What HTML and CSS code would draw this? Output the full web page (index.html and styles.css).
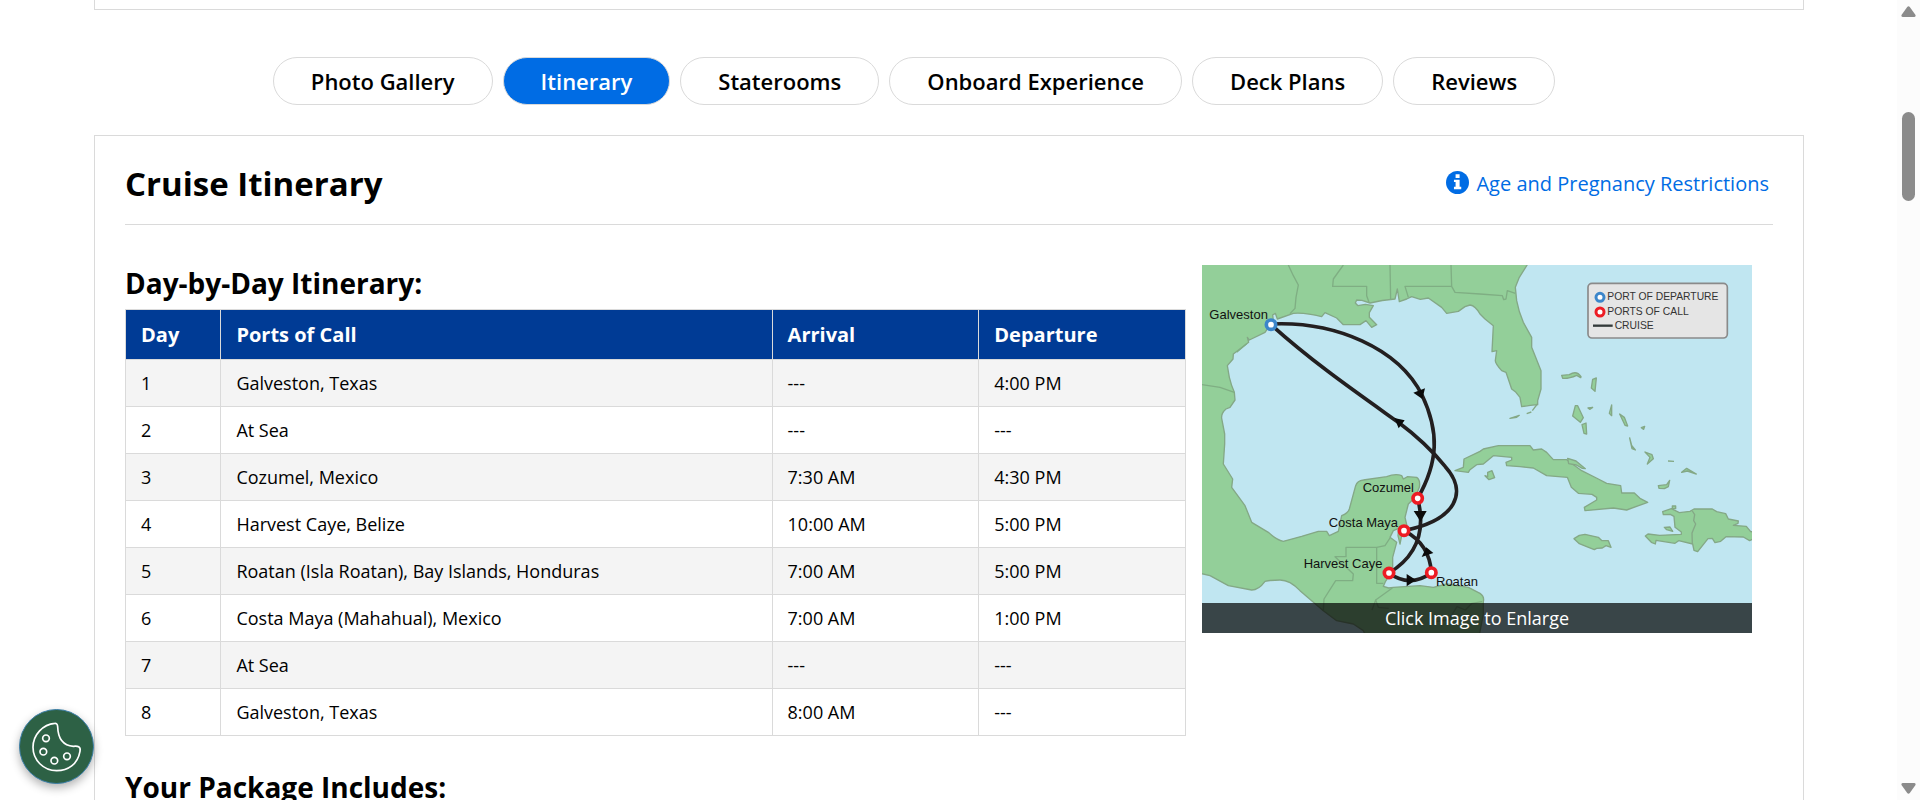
FILE: index.html
```html
<!DOCTYPE html>
<html lang="en">
<head>
<meta charset="utf-8">
<meta name="viewport" content="width=device-width, initial-scale=1">
<title>Cruise Itinerary</title>
<link rel="stylesheet" href="styles.css">
</head>
<body>
<main class="page">
  <div class="panel panel-previous"></div>

  <nav class="tabs" aria-label="Cruise details">
    <button class="tab" type="button">Photo Gallery</button>
    <button class="tab tab-active" type="button" aria-current="true">Itinerary</button>
    <button class="tab" type="button">Staterooms</button>
    <button class="tab" type="button">Onboard Experience</button>
    <button class="tab" type="button">Deck Plans</button>
    <button class="tab" type="button">Reviews</button>
  </nav>

  <section class="panel itinerary">
    <header class="panel-header">
      <h1 class="panel-title">Cruise Itinerary</h1>
      <a class="restrictions" href="#restrictions">
        <svg class="info-icon" viewBox="0 0 24 24" aria-hidden="true">
          <circle cx="12" cy="12" r="12" fill="#006ce4"/>
          <path fill="#fff" d="M10 3.500h4.200v3.800H10zM8.300 9h5.900v7.500h1.700v2.500H8.300v-2.500H10v-5H8.300z"/>
        </svg>
        <span>Age and Pregnancy Restrictions</span>
      </a>
    </header>

    <div class="columns">
      <div class="schedule">
        <h2 class="section-title" id="schedule-title">Day-by-Day Itinerary:</h2>
        <table class="schedule-table" aria-labelledby="schedule-title">
          <colgroup><col class="col-day"><col class="col-port"><col class="col-time"><col class="col-time"></colgroup>
          <thead>
            <tr><th scope="col">Day</th><th scope="col">Ports of Call</th><th scope="col">Arrival</th><th scope="col">Departure</th></tr>
          </thead>
          <tbody>
            <tr><td>1</td><td>Galveston, Texas</td><td>---</td><td>4:00 PM</td></tr>
            <tr><td>2</td><td>At Sea</td><td>---</td><td>---</td></tr>
            <tr><td>3</td><td>Cozumel, Mexico</td><td>7:30 AM</td><td>4:30 PM</td></tr>
            <tr><td>4</td><td>Harvest Caye, Belize</td><td>10:00 AM</td><td>5:00 PM</td></tr>
            <tr><td>5</td><td>Roatan (Isla Roatan), Bay Islands, Honduras</td><td>7:00 AM</td><td>5:00 PM</td></tr>
            <tr><td>6</td><td>Costa Maya (Mahahual), Mexico</td><td>7:00 AM</td><td>1:00 PM</td></tr>
            <tr><td>7</td><td>At Sea</td><td>---</td><td>---</td></tr>
            <tr><td>8</td><td>Galveston, Texas</td><td>8:00 AM</td><td>---</td></tr>
          </tbody>
        </table>
      </div>

      <a class="map" href="#map">
        <svg class="map-image" viewBox="0 0 1650 1104" role="img" aria-label="Route map">
          <rect width="1650" height="1104" fill="#c0e6f1"/>
          <g class="land">
            <path d="M-6 -6H979L952 37 940 67 944 107Q950 140 964 172L989 217V247L1017 317V372L1007 407V419L985 421 959 425 954 397 940 380 929 372 912 322 899 317Q880 295 880 287L884 257 870 260 874 182 849 162 834 147Q820 122 804 120L789 125 769 139 734 145 719 127 679 99 655 103 629 95 614 102 592 110 586 72 579 102Q540 105 504 114L480 106 464 105 460 114 468 122 490 118 514 122 502 143 502 157 524 179 509 187 492 167 474 179H424L404 159 369 143 359 155Q310 142 274 145L226 162 220 145 212 150 214 166 189 202 142 225 136 217 140 232 94 267 93 282 76 302 82 337Q88 362 97 382L99 405 84 427 72 432Q57 445 59 460L68 507V537L64 597 92 642 89 667 129 722 149 772 199 802Q225 825 244 829L299 814 349 799 374 799 382 812 409 799 419 752Q438 745 442 732L461 662Q466 647 484 645L554 635Q580 625 599 632L604 642 617 635 644 637Q656 645 652 667L640 697 619 717 609 757 616 787 599 812 594 837 588 812 590 790 574 797 564 817 584 832 572 877V917L550 950 544 964 560 969 574 967 654 962 694 967 734 957 799 967 834 985Q848 995 844 1010V1047L832 1110H490L484 1097 454 1077 404 1067 364 1037 294 977Q264 945 234 945T189 949Q170 975 149 975L79 962 24 932-6 925Z"/>
            <path d="M759 617L784 607 786 582 834 559 844 552 889 542H984L994 555 1019 552 1034 562 1054 584H1094L1139 617 1189 642 1214 655 1256 662 1259 684H1297L1314 700 1337 712 1274 735 1234 729 1149 737 1147 727 1184 705V697L1170 688 1129 685 1108 667 1096 637 1034 632 994 609 954 605 914 602 912 592 929 585V577L874 572 844 597 824 599 804 614 799 622Z"/>
            <g transform="translate(804 -33)">
              <path d="M275 364L298 362Q320 348 333 368L332 371 320 364Q295 375 278 373ZM368 376L379 372 375 412 364 402ZM316 455L323 455 340 491 331 505 308 486ZM336 512L348 507 350 540 342 538ZM354 462L368 460 359 466ZM425 453V485L418 478ZM449 480L463 490 473 516 465 514ZM514 521L524 517 521 526ZM120 493L148 484 140 490ZM170 479L184 474M187 470L202 450M479 552L485 574 496 588 486 584ZM525 594L546 602 550 614 532 630 540 610Z"/>
            </g>
            <g transform="translate(804 537)">
              <path d="M45 95L53 98V85L66 80 74 101 57 107ZM293 43L318 51 346 74 337 73 319 63 296 59ZM312 284L328 274 345 271 385 280 396 290 415 290 423 310 408 305 397 312 380 313 373 317 350 308 328 299ZM565 125L590 122 599 109 595 128 583 134 567 133ZM635 85L650 73 679 90 652 81ZM594 51L612 52M583 250L600 249 608 262 590 257ZM607 186H617V194H607Z"/>
              <path d="M578 203L604 194 628 206 660 202 672 195H727L740 203 767 209 775 225 805 231 804 238 790 244 829 247 842 263 860 264V280L839 290 820 279 768 278 752 292 735 296 727 283 714 284 698 304 683 323 672 319 668 300 626 290 615 298 558 289 556 300 544 295 526 276 534 270 569 274 634 271 634 264 615 250 612 217 601 211 580 212Z"/>
              <path fill="none" d="M667 201L674 212 671 230 677 240 666 267 667 300"/>
            </g>
          </g>
          <g class="borders">
            <path d="M259 0L274 32 289 60 282 97 279 130 264 146M424 0L394 42 392 64H494V92L501 112M564 0L566 105M747 0L749 64H609L619 97M749 64L759 82 834 87 901 92 905 104 912 102 916 77 940 85M0 359L54 367 97 382M564 819L549 842 524 847V955H544M524 847H432V875H399L454 927 452 947H401L366 1002 364 1037M571 969L521 1005 529 1027 560 1030M521 1005L510 1035M840 1010L810 1015 790 1035 765 1025 740 1065 700 1070M104 262L134 236"/>
          </g>
          <g class="route">
            <path d="M207 177C400 168 590 250 660 390C712 500 710 590 647 700"/>
            <path d="M647 700C670 790 650 870 561 924Q624 970 688 923C685 870 660 825 606 797"/>
            <path d="M606 797C765 765 798 680 730 605C695 562 640 510 589 472C460 380 330 290 207 179"/>
          </g>
          <g fill="#0b0b0b">
            <path d="M634 383L669 370 661 402ZM577 459L608 466 590 490ZM635 738L674 738 656 770ZM614 927L642 945 614 964ZM659 876L694 864 673 847Z"/>
          </g>
          <g class="stop stop-start"><circle cx="207" cy="179" r="14"/></g>
          <g class="stop">
            <circle cx="647" cy="700" r="14"/><circle cx="606" cy="797" r="14"/>
            <circle cx="561" cy="924" r="14"/><circle cx="688" cy="923" r="14"/>
          </g>
          <g class="map-label">
            <text x="22" y="162">Galveston</text>
            <text x="482" y="680">Cozumel</text>
            <text x="380" y="785">Costa Maya</text>
            <text x="305" y="910">Harvest Caye</text>
            <text x="702" y="962">Roatan</text>
          </g>
          <rect x="1158" y="55" width="418" height="164" rx="12" fill="#e5e5e5" stroke="#8a8a8a" stroke-width="5"/>
          <circle cx="1194" cy="97" r="12" fill="#fff" stroke="#3c86ca" stroke-width="9"/>
          <circle cx="1194" cy="141" r="12" fill="#fff" stroke="#ed1c24" stroke-width="9"/>
          <path d="M1173 182H1232" stroke="#333a3a" stroke-width="7"/>
          <g class="legend-label">
            <text x="1216" y="106">PORT OF DEPARTURE</text>
            <text x="1216" y="150">PORTS OF CALL</text>
            <text x="1238" y="191">CRUISE</text>
          </g>
        </svg>
        <span class="map-caption">Click Image to Enlarge</span>
      </a>
    </div>

    <h2 class="section-title package-title">Your Package Includes:</h2>
  </section>
</main>

<button class="cookie-button" type="button" aria-label="Cookie settings">
  <svg class="cookie-icon" viewBox="0 0 150 150" fill="none" stroke="#fff" stroke-width="5" aria-hidden="true">
    <path d="M68 4Q76 3 77 14C78 48 91 70 124 73C137 71 147 74 144 88C137 127 108 146 74 146C34 146 3 114 3 76C3 37 34 7 68 4Z"/>
    <circle cx="42" cy="49" r="10"/><circle cx="34" cy="89" r="10"/><circle cx="67" cy="116" r="10"/><circle cx="105" cy="103" r="10"/>
  </svg>
</button>

<div class="scroll-rail" aria-hidden="true">
  <svg class="scroll-arrow" viewBox="0 0 15 11"><path d="M6.200 1Q7.500-.5 8.800 1L14.500 9Q15 11 13 11H2Q0 11 .5 9Z" fill="#8b8b8b"/></svg>
  <div class="scroll-thumb"></div>
  <svg class="scroll-arrow scroll-arrow-down" viewBox="0 0 15 11"><path d="M6.200 10Q7.500 11.500 8.800 10L14.500 2Q15 0 13 0H2Q0 0 .5 2Z" fill="#8b8b8b"/></svg>
</div>
</body>
</html>
```

FILE: styles.css
```css
* { box-sizing: border-box; }

body {
  margin: 0;
  padding-right: 23px;
  height: 100vh;
  overflow: hidden;
  background: #fff;
  color: #000;
  font-family: "Open Sans", "Noto Sans", sans-serif;
  font-size: 18px;
}

.page { padding: 0 93px 0 94px; }

.panel { border: 1px solid #dadada; }
.panel-previous { height: 10px; border-top: 0; }

.tabs {
  display: flex;
  justify-content: center;
  gap: 10px;
  padding: 47px 70px 30px 0;
}

.tab {
  height: 48px;
  padding: 0 37px;
  border: 1px solid #dadada;
  border-radius: 24px;
  background: #fff;
  color: #000;
  font: 600 22px/32px "Open Sans", "Noto Sans", sans-serif;
  white-space: nowrap;
}
.tab-active { background: #006ce4; color: #fff; }

.itinerary { padding: 0 30px 40px; }

.panel-header {
  display: flex;
  align-items: center;
  justify-content: space-between;
  height: 89px;
  padding: 7px 4px 0 0;
  border-bottom: 1px solid #dadada;
}
.panel-title { margin: 0; font-size: 33px; line-height: 44px; font-weight: 700; }

.restrictions {
  display: flex;
  align-items: flex-start;
  gap: 7px;
  color: #006ce4;
  font-size: 20px;
  line-height: 30px;
  text-decoration: none;
}
.info-icon { width: 23px; height: 23px; margin-top: 2px; }

.columns {
  display: grid;
  grid-template-columns: minmax(0, 1061fr) minmax(0, 550fr);
  gap: 16px;
  align-items: start;
  padding: 40px 21px 0 0;
}

.section-title { margin: 0; font-size: 28px; line-height: 36px; font-weight: 700; }
.schedule .section-title { padding-bottom: 8px; }

.schedule-table {
  width: 100%;
  border-collapse: collapse;
  table-layout: fixed;
  line-height: 26px;
}
.col-day { width: 9%; }
.col-port { width: 52%; }
.schedule-table th,
.schedule-table td {
  height: 47px;
  padding: 0 15px;
  border: 1px solid #dadada;
  text-align: left;
}
.schedule-table th { height: 50px; background: #003b95; color: #fff; font-size: 20px; font-weight: 700; }
.schedule-table tbody tr:nth-child(odd) { background: #f4f4f4; }

.map { position: relative; display: block; color: #fff; text-decoration: none; }
.map-image { display: block; width: 100%; }
.map-caption {
  position: absolute;
  inset: auto 0 0;
  background: rgba(0, 0, 0, .7);
  line-height: 30px;
  text-align: center;
}

.land { fill: #93cf99; stroke: #84a886; stroke-width: 4; stroke-linejoin: round; }
.borders { fill: none; stroke: #7fae83; stroke-width: 4; stroke-linejoin: round; }
.route { fill: none; stroke: #231f20; stroke-width: 11; }
.stop { fill: #fff; stroke: #ed1c24; stroke-width: 11; }
.stop-start { stroke: #3c86ca; }
.map-label { fill: #111; font: 39px "Liberation Sans", Arial, sans-serif; }
.legend-label { fill: #333; font: 31px "Liberation Sans", Arial, sans-serif; }

.package-title { padding-top: 33px; }

.cookie-button {
  position: fixed;
  left: 19px;
  bottom: 16px;
  display: grid;
  place-items: center;
  width: 75px;
  height: 75px;
  padding: 0;
  border: 1px solid #3c7fa8;
  border-radius: 50%;
  background: #2d6145;
  box-shadow: 0 4px 10px rgba(0, 0, 0, .3);
}
.cookie-icon { width: 50px; height: 50px; }

.scroll-rail {
  position: fixed;
  inset: 0 0 0 auto;
  display: flex;
  flex-direction: column;
  align-items: center;
  width: 23px;
  padding: 6px 0;
  background: #fcfcfc;
}
.scroll-arrow { width: 15px; height: 11px; }
.scroll-arrow-down { margin-top: auto; }
.scroll-thumb { width: 13px; height: 89px; margin-top: 95px; border-radius: 7px; background: #8b8b8b; }
```
